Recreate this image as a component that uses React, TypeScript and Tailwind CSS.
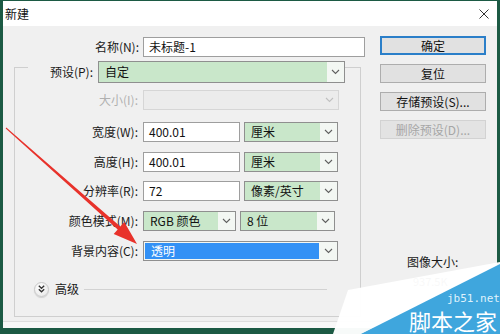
const font = { fontFamily: '"Noto Sans CJK SC", "Noto Sans", sans-serif' };

function Chevron({ disabled = false }: { disabled?: boolean }) {
  return (
    <svg width="9" height="6" viewBox="0 0 9 6">
      <polyline
        points="1,1 4.5,4.5 8,1"
        fill="none"
        stroke={disabled ? "#c0c0c0" : "#606060"}
        strokeWidth="1.1"
      />
    </svg>
  );
}

function Select({
  value,
  width,
  height = "h-[20px]",
  tone = "green",
}: {
  value: string;
  width: string;
  height?: string;
  tone?: "green" | "blue" | "disabled";
}) {
  const fill =
    tone === "green"
      ? "bg-[#c9e7ca] text-[#111]"
      : tone === "blue"
      ? "bg-[#3391f5] text-white"
      : "bg-[#ececec]";
  return (
    <div
      className={`${width} ${height} flex border ${
        tone === "disabled" ? "border-[#d6d6d6] bg-[#ececec]" : "border-[#8f8f8f] bg-[#f3f7f3]"
      }`}
    >
      <div className={`flex flex-1 items-center pl-[6px] text-[12px] ${fill} ${tone === "blue" ? "m-[1px]" : ""}`}>
        {value}
      </div>
      <div className="flex w-[17px] items-center justify-center">
        <Chevron disabled={tone === "disabled"} />
      </div>
    </div>
  );
}

function Input({ value, width }: { value: string; width: string }) {
  return (
    <div className={`${width} flex h-[20px] items-center border border-[#9e9e9e] bg-white pl-[5px] text-[12px] text-[#111]`}>
      {value}
    </div>
  );
}

function Row({ label, children, mt, muted = false }: { label: string; children: React.ReactNode; mt: string; muted?: boolean }) {
  return (
    <div className={`flex h-[20px] items-center ${mt}`}>
      <div className={`w-[125px] pr-[2px] text-right text-[12px] ${muted ? "text-[#b0b0b0]" : "text-[#1a1a1a]"}`}>{label}</div>
      <div className="ml-[3px] flex gap-[4px]">{children}</div>
    </div>
  );
}

function Button({ label, primary = false, disabled = false }: { label: string; primary?: boolean; disabled?: boolean }) {
  return (
    <div
      className={`flex h-[19px] w-[106px] items-center justify-center border text-[12px] ${
        primary
          ? "border-[#2b7fc9] bg-[#e1e1e1] text-[#111] shadow-[inset_0_0_0_1px_#2b7fc9]"
          : disabled
          ? "border-[#d2d2d2] bg-[#e3e3e3] text-[#a6a6a6]"
          : "border-[#adadad] bg-[#e1e1e1] text-[#111]"
      }`}
    >
      {label}
    </div>
  );
}

export default function App() {
  return (
    <div className="relative h-[334px] w-[500px] overflow-hidden bg-[#1c5a44] pl-[3px] pt-[1px]" style={font}>
      <div className="w-[494px]">
        <div className="flex h-[25px] items-center justify-between bg-white pl-[2px] pr-[8px]">
          <span className="text-[12px] text-[#111]">新建</span>
          <svg width="10" height="10" viewBox="0 0 10 10">
            <path d="M0.5 0.5 L9.5 9.5 M9.5 0.5 L0.5 9.5" stroke="#333" strokeWidth="1" />
          </svg>
        </div>

        <div className="flex h-[295px] bg-[#f0f0f0]">
          <div className="w-[377px]">
            <div className="mt-[11px] flex h-[20px] items-center">
              <div className="w-[137px] pr-[1px] text-right text-[12px] text-[#1a1a1a]">名称(N):</div>
              <div className="ml-[3px]">
                <Input value="未标题-1" width="w-[222px]" />
              </div>
            </div>

            <div className="ml-[11px] mt-[10px] h-[250px] w-[347px] border border-[#cfcfcf]">
              <div className="-mt-[7px] flex h-[22px] items-center">
                <div className="ml-[13px] w-[70px] bg-[#f0f0f0] pr-[5px] text-right text-[12px] text-[#1a1a1a]">预设(P):</div>
                <Select value="自定" width="w-[247px]" height="h-[22px]" />
                <div className="h-[4px] w-[5px] bg-[#f0f0f0]" />
              </div>

              <Row label="大小(I):" mt="mt-[7px]" muted>
                <Select value="" width="w-[196px]" tone="disabled" />
              </Row>
              <Row label="宽度(W):" mt="mt-[12px]">
                <Input value="400.01" width="w-[97px]" />
                <Select value="厘米" width="w-[94px]" />
              </Row>
              <Row label="高度(H):" mt="mt-[10px]">
                <Input value="400.01" width="w-[97px]" />
                <Select value="厘米" width="w-[94px]" />
              </Row>
              <Row label="分辨率(R):" mt="mt-[9px]">
                <Input value="72" width="w-[97px]" />
                <Select value="像素/英寸" width="w-[94px]" />
              </Row>
              <Row label="颜色模式(M):" mt="mt-[10px]">
                <Select value="RGB 颜色" width="w-[93px]" />
                <Select value="8 位" width="w-[95px]" />
              </Row>
              <Row label="背景内容(C):" mt="mt-[10px]">
                <Select value="透明" width="w-[195px]" tone="blue" />
              </Row>

              <div className="mt-[20px] flex h-[16px] items-center">
                <div className="ml-[19px] flex h-[15px] w-[15px] items-center justify-center rounded-full border border-[#c8c8c8] bg-[radial-gradient(circle_at_40%_35%,#ffffff,#e4e4e4)] shadow-[0_1px_1px_#cfcfcf]">
                  <svg width="7" height="8" viewBox="0 0 7 8">
                    <polyline points="0.8,0.8 3.5,3.3 6.2,0.8" fill="none" stroke="#333" strokeWidth="1.3" />
                    <polyline points="0.8,4.3 3.5,6.8 6.2,4.3" fill="none" stroke="#333" strokeWidth="1.3" />
                  </svg>
                </div>
                <span className="ml-[6px] text-[12px] text-[#1a1a1a]">高级</span>
                <div className="ml-[5px] h-px w-[243px] bg-[#d2d2d2]" />
              </div>
            </div>
          </div>

          <div className="flex w-[106px] flex-col pt-[10px]">
            <div className="flex flex-col gap-[9px]">
              <Button label="确定" primary />
              <Button label="复位" />
              <Button label="存储预设(S)..." />
              <Button label="删除预设(D)..." disabled />
            </div>
            <div className="mt-[114px] pl-[27px] text-[12px] text-[#1a1a1a]">图像大小:</div>
            <div className="mt-[4px] pl-[33px] text-[11px] leading-[13px] text-[#1a1a1a]">937.5K</div>
          </div>
        </div>
        <div className="h-[7px] border-t border-[#dedede] bg-[#f8f8f8]" />
      </div>

      <svg className="absolute left-0 top-0" width="500" height="334" viewBox="0 0 500 334">
        <polygon
          points="6.3,127.6 120.3,226.6 124.3,222.1 137,244 113.7,234.1 117.7,229.6 5.7,128.4"
          fill="#e8322b"
        />
        <polygon points="348,290 500,262 500,266 362,334 333,334" fill="#ffffff" opacity="0.97" />
        <polygon points="500,264 500,334 361,334" fill="#3fa6dd" />
      </svg>
      <div className="absolute left-[447px] top-[293px] font-['DejaVu_Sans_Mono',monospace] text-[11px] leading-[11px] text-[#dff2fc]">
        jb51.net
      </div>
      <div className="absolute left-[409px] top-[309px] text-[22px] leading-[22px] text-white">脚本之家</div>
    </div>
  );
}
